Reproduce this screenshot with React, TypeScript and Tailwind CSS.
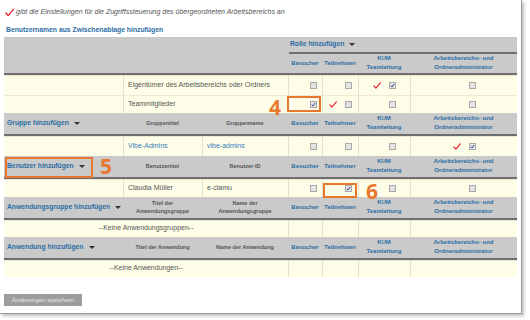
import type { ReactNode } from "react";

// role columns: Besucher, Teilnehmer, KUM Teamleitung, Arbeitsbereichs- und Ordneradministrator
type Role = { red?: boolean; on?: boolean };

const RedCheck = ({ show = true, big = false }: { show?: boolean; big?: boolean }) => (
    <svg
        viewBox="0 0 10 9"
        className={big ? "h-[9px] w-[9px] shrink-0" : show ? "h-[7px] w-[8px] shrink-0" : "invisible h-[7px] w-[8px] shrink-0"}
    >
        <path d="M1 5 L3.5 8 L9.3 1" fill="none" stroke="#e2212b" strokeWidth="1.5" strokeLinecap="round" strokeLinejoin="round" />
    </svg>
);

const Box = ({ on = false }: { on?: boolean }) => (
    <span className="flex h-[7px] w-[7px] shrink-0 items-center justify-center border border-[#a9a9a9] bg-[#e3e3e3]">
        {on && (
            <svg viewBox="0 0 6 6" className="h-[5px] w-[5px]">
                <path d="M1 3.2 L2.4 4.8 L5 1.2" fill="none" stroke="#26398a" strokeWidth="1.1" />
            </svg>
        )}
    </span>
);

const Caret = () => (
    <span className="ml-[5px] inline-block h-0 w-0 border-x-[3px] border-t-[3px] border-x-transparent border-t-[#333]" />
);

const Title = ({ children }: { children: ReactNode }) => (
    <span className="flex items-center text-[6.75px] font-bold text-[#2c6ea6]">
        {children}
        <Caret />
    </span>
);

const head = "bg-[#cacaca] border-b-[2px] border-b-[#6e6e6e] h-[23px] p-0 align-middle";
const cell = "bg-[#fefee8] border-t border-t-[#ebebd5] p-0 align-middle";

const RoleHeads = () => (
    <>
        <th className={`${head} text-[6px] font-bold leading-[9px] text-[#2c6ea6]`}>Besucher</th>
        <th className={`${head} text-[6px] font-bold leading-[9px] text-[#2c6ea6]`}>Teilnehmer</th>
        <th className={`${head} text-[6px] font-bold leading-[9px] text-[#2c6ea6]`}>
            KUM
            <br />
            Teamleitung
        </th>
        <th className={`${head} text-[6px] font-bold leading-[9px] text-[#2c6ea6]`}>
            Arbeitsbereichs- und
            <br />
            Ordneradministrator
        </th>
    </>
);

const SubHead = ({ children }: { children: ReactNode }) => (
    <th className={`${head} text-[5.5px] font-bold leading-[8px] text-[#555]`}>{children}</th>
);

const RoleCells = ({ roles, marks }: { roles: Role[]; marks?: (ReactNode | null)[] }) => (
    <>
        {roles.map((r, i) => (
            <td key={i} className={`${cell} relative border-l border-l-[#e2e2cc]`}>
                <div className="flex items-center justify-center gap-[8px]">
                    <RedCheck show={!!r.red} />
                    <Box on={r.on} />
                </div>
                {marks?.[i]}
            </td>
        ))}
    </>
);

const EmptyCells = () => (
    <>
        {[0, 1, 2, 3].map(i => (
            <td key={i} className={`${cell} border-l border-l-[#e2e2cc]`} />
        ))}
    </>
);

const Num = ({ n, className }: { n: string; className: string }) => (
    <span className={`absolute z-10 font-['Open_Sans',sans-serif] text-[21px] font-bold leading-none text-[#e8782f] ${className}`}>
        {n}
    </span>
);

const App = () => {
    return (
        <div className="h-[320px] w-[530px] bg-white font-['Liberation_Sans',Arial,sans-serif]">
            <div className="h-[314px] w-[522px] border-b border-r border-[#9c9c9c] px-[4px] pt-[7px] shadow-[2px_2px_3px_rgba(0,0,0,0.25)]">
                <div className="flex items-center gap-[2px] pl-[1px]">
                    <RedCheck big />
                    <span className="text-[7px] italic text-[#555]">
                        gibt die Einstellungen für die Zugriffssteuerung des übergeordneten Arbeitsbereichs an
                    </span>
                </div>
                <div className="mt-[7px] pl-[2px] text-[6.8px] font-bold text-[#2c6ea6]">
                    Benutzernamen aus Zwischenablage hinzufügen
                </div>

                <table className="mt-[2px] w-[513px] table-fixed border-separate border-spacing-0">
                    <colgroup>
                        <col className="w-[119px]" />
                        <col className="w-[79px]" />
                        <col className="w-[86px]" />
                        <col className="w-[34px]" />
                        <col className="w-[36px]" />
                        <col className="w-[52px]" />
                        <col className="w-[107px]" />
                    </colgroup>
                    <tbody>
                        {/* Rolle hinzufügen */}
                        <tr>
                            <td colSpan={3} rowSpan={2} className="border-b-[2px] border-b-[#6e6e6e] bg-[#cacaca] p-0" />
                            <td colSpan={4} className="h-[17px] bg-[#cacaca] p-0 align-middle">
                                <div className="ml-[1px] flex h-[17px] items-center border-b-[2px] border-b-[#6e6e6e] pl-[1px]">
                                    <Title>Rolle hinzufügen</Title>
                                </div>
                            </td>
                        </tr>
                        <tr>
                            <th className="h-[21px] border-b-[2px] border-b-[#6e6e6e] bg-[#cacaca] p-0 text-[6px] font-bold leading-[9px] text-[#2c6ea6]">Besucher</th>
                            <th className="border-b-[2px] border-b-[#6e6e6e] bg-[#cacaca] p-0 text-[6px] font-bold leading-[9px] text-[#2c6ea6]">Teilnehmer</th>
                            <th className="border-b-[2px] border-b-[#6e6e6e] bg-[#cacaca] p-0 text-[6px] font-bold leading-[9px] text-[#2c6ea6]">
                                KUM
                                <br />
                                Teamleitung
                            </th>
                            <th className="border-b-[2px] border-b-[#6e6e6e] bg-[#cacaca] p-0 text-[6px] font-bold leading-[9px] text-[#2c6ea6]">
                                Arbeitsbereichs- und
                                <br />
                                Ordneradministrator
                            </th>
                        </tr>
                        <tr>
                            <td className={`${cell} h-[20px]`} />
                            <td colSpan={2} className={`${cell} border-l border-l-[#e2e2cc] pl-[4px] text-[7px] text-[#555]`}>
                                Eigentümer des Arbeitsbereichs oder Ordners
                            </td>
                            <RoleCells roles={[{}, {}, { red: true, on: true }, {}]} />
                        </tr>
                        <tr>
                            <td className={`${cell} h-[18px]`} />
                            <td colSpan={2} className={`${cell} border-l border-l-[#e2e2cc] pl-[4px] text-[7px] text-[#555]`}>
                                Teammitglieder
                            </td>
                            <RoleCells
                                roles={[{ on: true }, { red: true }, {}, {}]}
                                marks={[
                                    <>
                                        <span className="absolute inset-[1px] -left-[2px] top-0 border-2 border-[#e8782f]" />
                                        <Num n="4" className="-left-[20px] top-[1px]" />
                                    </>,
                                ]}
                            />
                        </tr>

                        {/* Gruppe */}
                        <tr>
                            <th className={`${head} pl-[3px] text-left`}>
                                <Title>Gruppe hinzufügen</Title>
                            </th>
                            <SubHead>Gruppentitel</SubHead>
                            <SubHead>Gruppenname</SubHead>
                            <RoleHeads />
                        </tr>
                        <tr>
                            <td className={`${cell} h-[20px]`} />
                            <td className={`${cell} border-l border-l-[#e2e2cc] pl-[4px] text-[7px] text-[#3a7cbd]`}>Vibe-Admins</td>
                            <td className={`${cell} border-l border-l-[#e2e2cc] pl-[4px] text-[7px] text-[#3a7cbd]`}>vibe-admins</td>
                            <RoleCells roles={[{}, {}, {}, { red: true, on: true }]} />
                        </tr>

                        {/* Benutzer */}
                        <tr>
                            <th className={`${head} relative pl-[3px] text-left`}>
                                <Title>Benutzer hinzufügen</Title>
                                <span className="absolute left-[1px] top-[1px] h-[21px] w-[88px] border-2 border-[#e8782f]" />
                                <Num n="5" className="left-[96px] top-[0px]" />
                            </th>
                            <SubHead>Benutzertitel</SubHead>
                            <SubHead>Benutzer-ID</SubHead>
                            <RoleHeads />
                        </tr>
                        <tr>
                            <td className={`${cell} h-[18px]`} />
                            <td className={`${cell} border-l border-l-[#e2e2cc] pl-[4px] text-[7px] text-[#555]`}>Claudia Müller</td>
                            <td className={`${cell} border-l border-l-[#e2e2cc] pl-[4px] text-[7px] text-[#555]`}>e-clamu</td>
                            <RoleCells
                                roles={[{}, { on: true }, {}, {}]}
                                marks={[
                                    null,
                                    <>
                                        <span className="absolute inset-[3px] -bottom-[1px] right-[1px] left-0 border-2 border-[#e8782f]" />
                                        <Num n="6" className="left-[43px] top-[1px]" />
                                    </>,
                                ]}
                            />
                        </tr>

                        {/* Anwendungsgruppe */}
                        <tr>
                            <th className={`${head} pl-[3px] text-left`}>
                                <Title>Anwendungsgruppe hinzufügen</Title>
                            </th>
                            <SubHead>
                                Titel der
                                <br />
                                Anwendungsgruppe
                            </SubHead>
                            <SubHead>
                                Name der
                                <br />
                                Anwendungsgruppe
                            </SubHead>
                            <RoleHeads />
                        </tr>
                        <tr>
                            <td colSpan={3} className={`${cell} h-[17px] text-center text-[7px] text-[#555]`}>
                                --Keine Anwendungsgruppen--
                            </td>
                            <EmptyCells />
                        </tr>

                        {/* Anwendung */}
                        <tr>
                            <th className={`${head} pl-[3px] text-left`}>
                                <Title>Anwendung hinzufügen</Title>
                            </th>
                            <SubHead>Titel der Anwendung</SubHead>
                            <SubHead>Name der Anwendung</SubHead>
                            <RoleHeads />
                        </tr>
                        <tr>
                            <td colSpan={3} className={`${cell} h-[17px] text-center text-[7px] text-[#555]`}>
                                --Keine Anwendungen--
                            </td>
                            <EmptyCells />
                        </tr>
                    </tbody>
                </table>

                <button className="mt-[17px] flex h-[12px] w-[78px] items-center justify-center bg-[#9d9d9d] text-[6.2px] text-[#e8e8e8]">
                    Änderungen speichern
                </button>
            </div>
        </div>
    );
};

export default App;
